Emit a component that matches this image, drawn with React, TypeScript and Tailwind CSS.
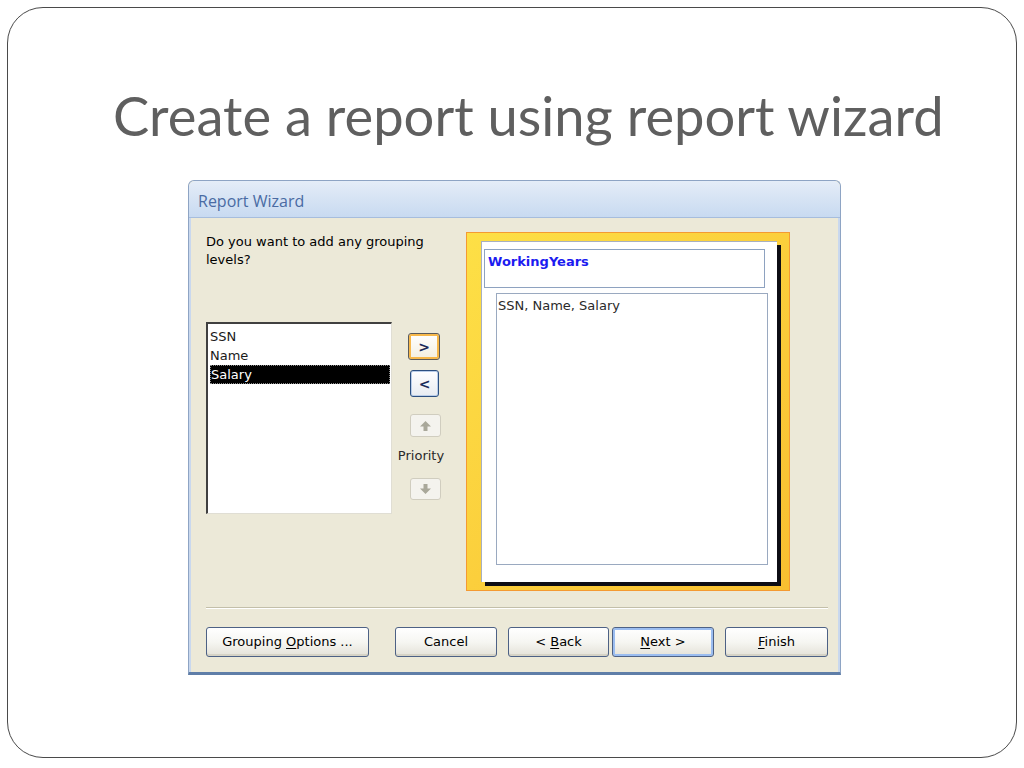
import React from "react";

const ui = { fontFamily: '"DejaVu Sans", Verdana, sans-serif' };

function Ul({ children }: { children: React.ReactNode }) {
  return <span className="underline underline-offset-2">{children}</span>;
}

function XpButton({
  className,
  focused,
  children,
}: {
  className: string;
  focused?: boolean;
  children: React.ReactNode;
}) {
  return (
    <button
      className={`h-[30px] rounded-[3px] border border-[#4d6185] bg-gradient-to-b from-white via-[#f6f6f2] to-[#e4e2d8] text-[13px] text-black ${
        focused ? "shadow-[inset_0_0_0_2px_#9bbdf0]" : "shadow-[inset_0_-2px_0_#d6d3c6]"
      } ${className}`}
      style={ui}
    >
      {children}
    </button>
  );
}

function ArrowIcon({ down }: { down?: boolean }) {
  return (
    <svg width="11" height="10" viewBox="0 0 11 10" className={down ? "rotate-180" : ""}>
      <polygon points="5.5,0 11,5.5 7.5,5.5 7.5,10 3.5,10 3.5,5.5 0,5.5" fill="#a9a89a" />
    </svg>
  );
}

export default function App() {
  return (
    <div className="w-[1024px] h-[768px] bg-white p-[7px]">
      <div className="h-[751px] rounded-[36px] border border-[#4a4a4a] pt-[77px]">
        <h1
          className="pl-[105px] text-[54.3px] leading-[60px] text-[#5f5f5f]"
          style={{ fontFamily: 'Lato, "Open Sans", sans-serif' }}
        >
          Create a report using report wizard
        </h1>

        {/* dialog */}
        <div className="ml-[180px] mt-[35px] w-[653px] h-[495px] rounded-t-[6px] border border-[#8ea4c4] border-b-[3px] border-b-[#5f7ea8] bg-[#ece9d8] flex flex-col">
          <div
            className="h-[37px] rounded-t-[6px] bg-gradient-to-b from-[#e5edf8] via-[#d6e3f4] to-[#c8daf1] border-b border-[#a6bddd] pl-[9px] pt-[3px] flex items-center text-[16px] text-[#4a6ba3]"
            style={{ fontFamily: '"Open Sans", sans-serif' }}
          >
            Report Wizard
          </div>
          <div className="flex-1 flex border-x-[2px] border-[#c9d8ee]">
            <div className="flex-1 flex flex-col pl-[15px] pr-[12px] pt-[14px]">
              <div className="flex">
                {/* left column */}
                <div className="w-[186px]">
                  <p className="w-max pt-[1px] text-[13px] leading-[18px] text-black" style={ui}>
                    Do you want to add any grouping
                    <br />
                    levels?
                  </p>
                  <div
                    className="mt-[53px] h-[192px] w-[186px] border-t-2 border-l-2 border-[#404040] border-r border-b border-r-[#e0ded4] border-b-[#e0ded4] bg-white pt-[3px] pl-[2px] pr-[1px] text-[13px] leading-[19px]"
                    style={ui}
                  >
                    <div className="text-[#1a1a1a]">SSN</div>
                    <div className="text-[#1a1a1a]">Name</div>
                    <div className="bg-black text-white outline-1 outline-dotted outline-[#888] -outline-offset-1 pl-[1px]">
                      Salary
                    </div>
                  </div>
                </div>

                {/* middle buttons */}
                <div className="ml-[5px] w-[48px] pt-[101px] flex flex-col">
                  <button
                    className="ml-[11px] w-[32px] h-[27px] rounded-[3px] border border-[#5a5a5a] bg-gradient-to-b from-white to-[#f3efe0] shadow-[inset_0_0_0_2px_#f7b84a] text-[14px] font-bold text-[#1a2a5a] leading-none"
                    style={ui}
                  >
                    &gt;
                  </button>
                  <button
                    className="ml-[13px] mt-[10px] w-[29px] h-[27px] rounded-[3px] border border-[#2c4f80] bg-gradient-to-b from-white to-[#e8ecf2] shadow-[inset_0_0_0_1px_#b9cde9] text-[14px] font-bold text-[#1a2a5a] leading-none"
                    style={ui}
                  >
                    &lt;
                  </button>
                  <div className="ml-[13px] mt-[17px] w-[31px] h-[23px] rounded-[3px] border border-[#d0cdbf] bg-[#f4f3ee] flex items-center justify-center">
                    <ArrowIcon />
                  </div>
                  <div className="mt-[11px] text-[13px] leading-[16px] text-[#2a2a2a] text-center" style={ui}>
                    Priority
                  </div>
                  <div className="ml-[13px] mt-[14px] w-[31px] h-[22px] rounded-[3px] border border-[#d0cdbf] bg-[#f4f3ee] flex items-center justify-center">
                    <ArrowIcon down />
                  </div>
                </div>

                {/* preview */}
                <div className="ml-[21px] w-[324px] h-[359px] border border-[#f49a32] bg-gradient-to-br from-[#fde046] via-[#fbcf3c] to-[#f8bf30] pl-[14px] pt-[8px]">
                  <div className="w-[296px] h-[341px] bg-white border-l border-t border-[#a8b0c0] shadow-[4px_4px_0_#0d0d14] pl-[2px] pt-[7px]">
                    <div className="w-[281px] h-[39px] border border-[#8ea2c0] pl-[3px] pt-[2px] text-[13px] font-bold text-[#1c1cf0]" style={ui}>
                      WorkingYears
                    </div>
                    <div
                      className="ml-[12px] mt-[5px] w-[272px] h-[272px] border border-[#9aa9c0] pl-[1px] pt-[2px] text-[13px] text-[#2a2a2a]"
                      style={ui}
                    >
                      SSN, Name, Salary
                    </div>
                  </div>
                </div>
              </div>

              {/* separator */}
              <div className="mt-[16px] border-t border-[#c3bfa9] border-b border-b-white" />

              {/* footer buttons */}
              <div className="mt-[18px] flex">
                <XpButton className="w-[163px]">
                  Grouping <Ul>O</Ul>ptions ...
                </XpButton>
                <XpButton className="ml-[26px] w-[102px]">Cancel</XpButton>
                <XpButton className="ml-[11px] w-[101px]">
                  &lt; <Ul>B</Ul>ack
                </XpButton>
                <XpButton focused className="ml-[3px] w-[102px]">
                  <Ul>N</Ul>ext &gt;
                </XpButton>
                <XpButton className="ml-[11px] w-[103px]">
                  <Ul>F</Ul>inish
                </XpButton>
              </div>
            </div>
          </div>
        </div>
      </div>
    </div>
  );
}
